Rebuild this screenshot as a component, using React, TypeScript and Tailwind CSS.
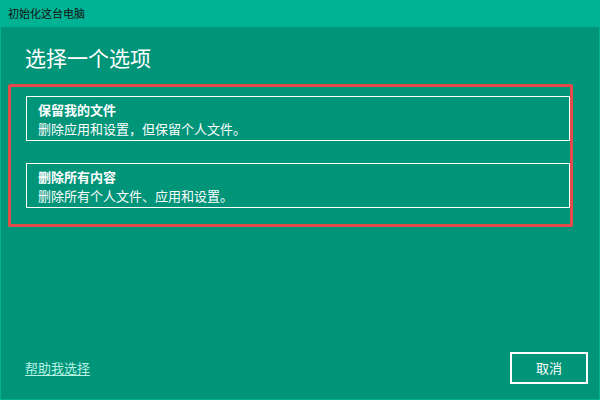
export default function App() {
  const options = [
    { title: '保留我的文件', desc: '删除应用和设置，但保留个人文件。' },
    { title: '删除所有内容', desc: '删除所有个人文件、应用和设置。' },
  ];

  return (
    <div
      className="w-[600px] h-[400px] flex flex-col bg-[#009479] border-x border-b border-[#00b294] overflow-hidden"
      style={{ fontFamily: '"Noto Sans CJK SC", "Noto Sans", sans-serif' }}
    >
      {/* Title bar */}
      <div className="h-[27px] shrink-0 bg-[#00b294] flex items-center pl-[7px] text-[11px] text-[#111]">
        初始化这台电脑
      </div>

      {/* Content */}
      <div className="flex-1 flex flex-col">
        <h1 className="mt-[16px] ml-[24px] text-[21px] leading-[28px] text-white">选择一个选项</h1>

        <div className="mt-[13px] ml-[7px] w-[565px] border-[3px] border-[#e44c4c] rounded-[2px] pl-[15px] pt-[9px] pb-[16px] flex flex-col gap-[22px]">
          {options.map(o => (
            <div key={o.title} className="h-[45px] border-[1.5px] border-white pl-[11px] pt-[3px] text-white">
              <div className="text-[13px] leading-[19px] font-bold">{o.title}</div>
              <div className="text-[13px] leading-[19px]">{o.desc}</div>
            </div>
          ))}
        </div>

        {/* Footer */}
        <div className="mt-auto mb-[15px] pl-[24px] pr-[11px] flex items-center justify-between">
          <a className="text-[13px] text-[#b5f2e4] underline underline-offset-2">帮助我选择</a>
          <button className="w-[78px] h-[32px] border-2 border-white text-white text-[13px]">取消</button>
        </div>
      </div>
    </div>
  );
}
